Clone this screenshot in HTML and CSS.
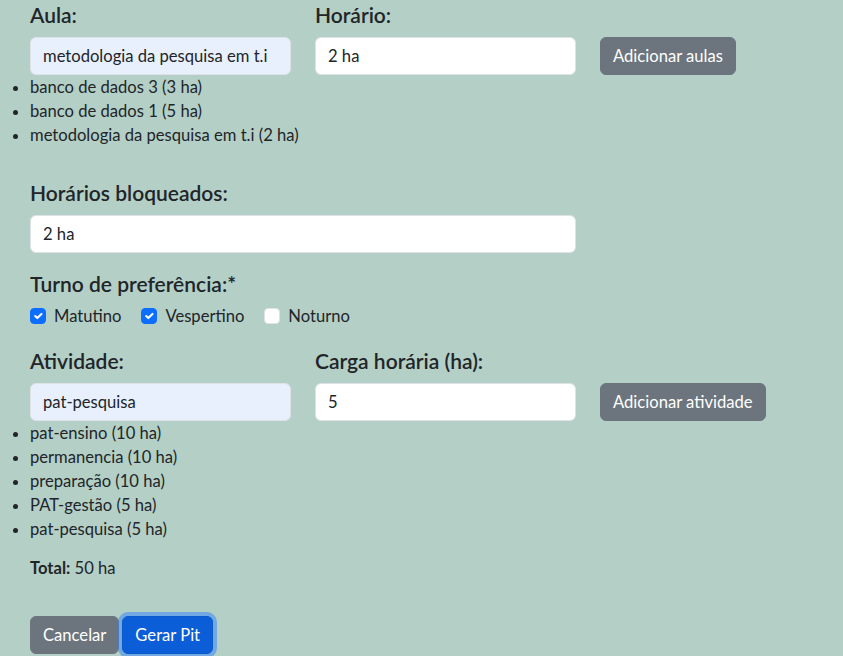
FILE: index.html
```html
<!DOCTYPE html>
<html lang="pt">
<head>
<meta charset="utf-8">
<title>Gerar PIT</title>
<link rel="stylesheet" href="styles.css">
</head>
<body>
<div class="page">
  <div class="row3">
    <div class="field">
      <label class="lbl">Aula:</label>
      <input class="ctl autofill" type="text" value="metodologia da pesquisa em t.i">
    </div>
    <div class="field">
      <label class="lbl">Horário:</label>
      <input class="ctl" type="text" value="2 ha">
    </div>
    <div class="action">
      <button class="btn gray">Adicionar aulas</button>
    </div>
  </div>
  <ul class="items">
    <li>banco de dados 3 (3 ha)</li>
    <li>banco de dados 1 (5 ha)</li>
    <li>metodologia da pesquisa em t.i (2 ha)</li>
  </ul>

  <div class="block blocked">
    <label class="lbl">Horários bloqueados:</label>
    <input class="ctl wide" type="text" value="2 ha">
  </div>

  <div class="block turno">
    <label class="lbl tight">Turno de preferência:*</label>
    <div class="checks">
      <label class="check"><span class="box on"><svg viewBox="0 0 20 20" width="16" height="16"><path d="M6 10l3 3l6-6" fill="none" stroke="#fff" stroke-width="3" stroke-linecap="round" stroke-linejoin="round"/></svg></span>Matutino</label>
      <label class="check"><span class="box on"><svg viewBox="0 0 20 20" width="16" height="16"><path d="M6 10l3 3l6-6" fill="none" stroke="#fff" stroke-width="3" stroke-linecap="round" stroke-linejoin="round"/></svg></span>Vespertino</label>
      <label class="check"><span class="box"></span>Noturno</label>
    </div>
  </div>

  <div class="row3 act">
    <div class="field">
      <label class="lbl">Atividade:</label>
      <input class="ctl autofill" type="text" value="pat-pesquisa">
    </div>
    <div class="field">
      <label class="lbl">Carga horária (ha):</label>
      <input class="ctl" type="text" value="5">
    </div>
    <div class="action">
      <button class="btn gray">Adicionar atividade</button>
    </div>
  </div>
  <ul class="items">
    <li>pat-ensino (10 ha)</li>
    <li>permanencia (10 ha)</li>
    <li>preparação (10 ha)</li>
    <li>PAT-gestão (5 ha)</li>
    <li>pat-pesquisa (5 ha)</li>
  </ul>

  <p class="total"><strong>Total:</strong> 50 ha</p>

  <div class="buttons">
    <button class="btn gray">Cancelar</button>
    <button class="btn blue">Gerar Pit</button>
  </div>
</div>
</body>
</html>
```
FILE: styles.css
```css
* { box-sizing: border-box; }
html, body {
  margin: 0;
  background: #b4cfc6;
  font-family: Lato, "Noto Sans", sans-serif;
  font-size: 16.6px;
  color: #212529;
  line-height: 24px;
}
.page {
  padding: 0;
  height: 656px;
  overflow: hidden;
}
.row3 {
  display: grid;
  grid-template-columns: 261px 261px auto;
  column-gap: 24px;
  margin-left: 30px;
  align-items: end;
}
.field { display: flex; flex-direction: column; }
.lbl {
  display: block;
  font-size: 21px;
  font-weight: 600;
  line-height: 30px;
  margin-bottom: 7px;
}
.lbl.tight { margin-bottom: 5px; }
.ctl {
  display: block;
  width: 100%;
  height: 38px;
  padding: 6px 12px;
  border: 1px solid #dee2e6;
  border-radius: 6px;
  background: #fff;
  font: inherit;
  color: #212529;
  outline: none;
}
.ctl.autofill { background: #e8f0fe; }
.ctl.wide { width: 546px; }
.action { display: flex; }
.btn {
  display: inline-block;
  height: 38px;
  padding: 6px 12px;
  border: 1px solid transparent;
  border-radius: 6px;
  font: inherit;
  line-height: 24px;
  color: #fff;
  cursor: pointer;
}
.btn.gray { background: #6c757d; border-color: #6c757d; }
.btn.blue {
  background: #0b5ed7;
  border-color: #0a58ca;
  box-shadow: 0 0 0 4px rgba(49, 132, 253, 0.5);
}
.items {
  margin: 0;
  padding-left: 30px;
  list-style: disc;
}
.block { margin-left: 30px; }
.blocked { margin-top: 31px; }
.turno { margin-top: 16px; }
.checks { display: flex; }
.check {
  display: flex;
  align-items: center;
  margin-right: 20px;
  line-height: 24px;
}
.box {
  width: 16px;
  height: 16px;
  border-radius: 4px;
  border: 1px solid #dee2e6;
  background: #fff;
  margin-right: 8px;
  display: flex;
  align-items: center;
  justify-content: center;
}
.box.on { background: #0d6efd; border-color: #0d6efd; }
.box svg { display: block; }
.act { margin-top: 18px; }
.total { margin: 15px 0 0 30px; }
.total strong { font-weight: 700; }
.buttons {
  margin: 36px 0 0 30px;
  display: flex;
  gap: 3px;
}
```
